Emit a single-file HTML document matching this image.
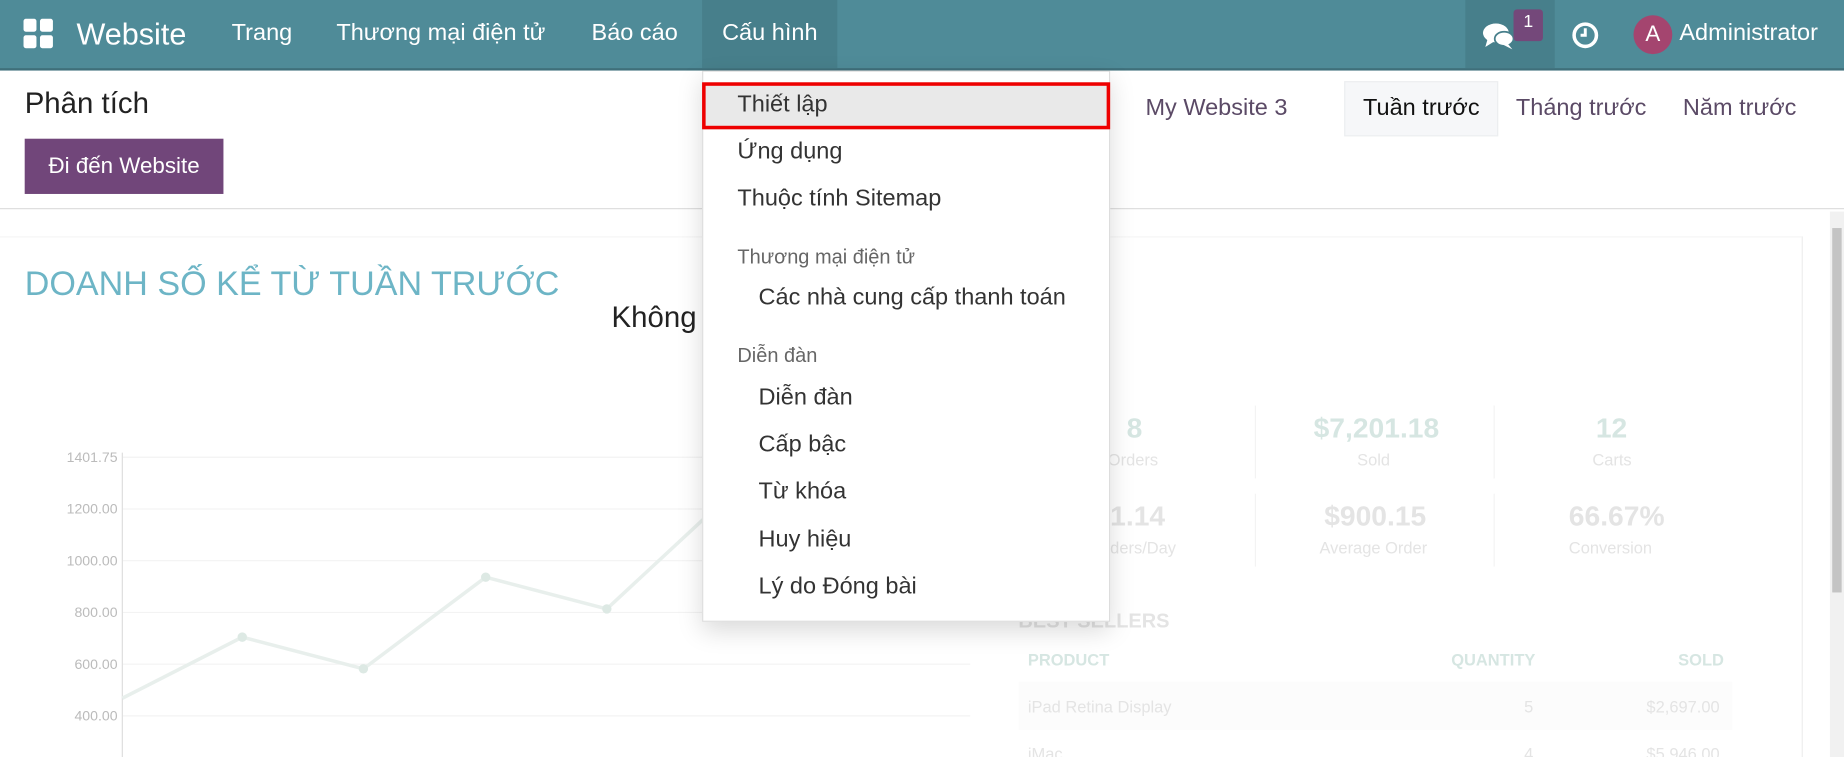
<!DOCTYPE html>
<html><head><meta charset="utf-8"><style>
body{margin:0;width:1844px;height:757px;overflow:hidden;background:#fff;font-family:"Liberation Sans","Noto Sans CJK SC",sans-serif;}
#w{position:absolute;left:0;top:0;width:1568px;height:644px;transform:scale(1.17602,1.1755);transform-origin:0 0;overflow:hidden;}
.a{position:absolute;white-space:nowrap;}
.nav{position:absolute;left:0;top:0;width:1568px;height:58px;background:#4f8b98;border-bottom:2px solid #3f6f7a;}
.nav .a{color:#fff;font-size:20px;top:17px;}
.dd .a{font-size:20px;color:#333;}
.dd .h{font-size:17px;color:#666;}
.f{color:#d6e6e2;}
.g{color:#e4e4e4;}
</style></head><body><div id="w">
<div class="nav">
 <div class="a" style="left:20px;top:16px;width:26px;height:26px;">
  <div style="position:absolute;left:0;top:0;width:11px;height:11px;background:#fff;border-radius:2px"></div>
  <div style="position:absolute;left:14px;top:0;width:11px;height:11px;background:#fff;border-radius:2px"></div>
  <div style="position:absolute;left:0;top:14px;width:11px;height:11px;background:#fff;border-radius:2px"></div>
  <div style="position:absolute;left:14px;top:14px;width:11px;height:11px;background:#fff;border-radius:2px"></div>
 </div>
 <div class="a" style="left:65px;top:14px;font-size:26px">Website</div>
 <div class="a" style="left:197px">Trang</div>
 <div class="a" style="left:286px">Thương mại điện tử</div>
 <div class="a" style="left:503px">Báo cáo</div>
 <div class="a" style="left:597px;top:0;width:115px;height:58px;background:#477f8b"></div>
 <div class="a" style="left:614px">Cấu hình</div>
 <div class="a" style="left:1246px;top:0;width:76px;height:58px;background:#477f8b"></div>
 <svg class="a" style="left:1260px;top:17px" width="30" height="28" viewBox="0 0 30 28"><ellipse cx="12" cy="11" rx="11" ry="8" fill="#fff"/><path d="M5 16 L3 23 L11 18Z" fill="#fff"/><ellipse cx="19" cy="16" rx="8" ry="6" fill="#fff" stroke="#477f8b" stroke-width="1.5"/><path d="M22 20 L26 25 L18 21Z" fill="#fff"/></svg>
 <div class="a" style="left:1287px;top:8px;width:25px;height:27px;background:#74487a;border-radius:3px;font-size:15px;text-align:center;line-height:22px">1</div>
 <svg class="a" style="left:1336px;top:18px" width="24" height="24" viewBox="0 0 24 24"><circle cx="12" cy="12" r="9.5" fill="none" stroke="#fff" stroke-width="3"/><path d="M12 6 V12 H8" fill="none" stroke="#fff" stroke-width="2.5"/></svg>
 <div class="a" style="left:1389px;top:13px;width:33px;height:33px;border-radius:50%;background:#a4456f;text-align:center;line-height:33px;font-size:19px;color:#fff">A</div>
 <div class="a" style="left:1428px">Administrator</div>
</div>
<div class="a" style="left:21px;top:74px;font-size:25px;color:#222">Phân tích</div>
<div class="a" style="left:21px;top:118px;width:169px;height:47px;background:#71467a;color:#fff;font-size:19px;text-align:center;line-height:47px">Đi đến Website</div>
<div class="a" style="left:974px;top:81px;font-size:20px;color:#5b4a66">My Website 3</div>
<div class="a" style="left:1143px;top:69px;width:131px;height:47px;background:#f6f7f9;border:1px solid #eceef0;box-sizing:border-box"></div>
<div class="a" style="left:1159px;top:81px;font-size:20px;color:#111">Tuần trước</div>
<div class="a" style="left:1289px;top:81px;font-size:20px;color:#5b4a66">Tháng trước</div>
<div class="a" style="left:1431px;top:81px;font-size:20px;color:#5b4a66">Năm trước</div>
<div class="a" style="left:0;top:177px;width:1568px;height:1px;background:#ddd"></div>
<div class="a" style="left:0;top:201px;width:1532px;height:443px;background:#fff;border-right:1px solid #eee;border-top:1px solid #f6f6f6"></div>
<div class="a" style="left:1556px;top:180px;width:12px;height:464px;background:#f1f1f1"></div>
<div class="a" style="left:1558px;top:194px;width:8px;height:310px;background:#c4c4c4"></div>
<div class="a" style="left:21px;top:226px;font-size:29px;color:#6db5c6">DOANH SỐ KỂ TỪ TUẦN TRƯỚC</div>
<div class="a" style="left:520px;top:256px;font-size:25px;color:#222">Không có dữ liệu bán hàng gần đây.</div>
<svg class="a" style="left:0;top:370px" width="830" height="274">
 <g stroke="#f3f3f3" stroke-width="1"><line x1="104" y1="19" x2="825" y2="19"/><line x1="104" y1="63" x2="825" y2="63"/><line x1="104" y1="107" x2="825" y2="107"/><line x1="104" y1="151" x2="825" y2="151"/><line x1="104" y1="195" x2="825" y2="195"/><line x1="104" y1="239" x2="825" y2="239"/></g>
 <line x1="104" y1="15" x2="104" y2="274" stroke="#ddd"/>
 <g font-size="12" fill="#bbb" text-anchor="end" font-family="Liberation Sans"><text x="100" y="23">1401.75</text><text x="100" y="67">1200.00</text><text x="100" y="111">1000.00</text><text x="100" y="155">800.00</text><text x="100" y="199">600.00</text><text x="100" y="243">400.00</text></g>
 <polyline points="104,224 206,172 309,199 413,121 516,148 600,70" fill="none" stroke="#e8efec" stroke-width="3"/>
 <g fill="#dde9e4"><circle cx="206" cy="172" r="4"/><circle cx="309" cy="199" r="4"/><circle cx="413" cy="121" r="4"/><circle cx="516" cy="148" r="4"/></g>
</svg>
<div class="a" style="left:1067px;top:345px;width:1px;height:62px;background:#f3f3f3"></div>
<div class="a" style="left:1270px;top:345px;width:1px;height:62px;background:#f3f3f3"></div>
<div class="a" style="left:1067px;top:420px;width:1px;height:62px;background:#f3f3f3"></div>
<div class="a" style="left:1270px;top:420px;width:1px;height:62px;background:#f3f3f3"></div>
<div class="a f" style="left:958px;top:351px;font-size:24px;font-weight:bold">8</div>
<div class="a f" style="left:1117px;top:351px;font-size:24px;font-weight:bold">$7,201.18</div>
<div class="a f" style="left:1357px;top:351px;font-size:24px;font-weight:bold">12</div>
<div class="a g" style="left:942px;top:383px;font-size:14px">Orders</div>
<div class="a g" style="left:1154px;top:383px;font-size:14px">Sold</div>
<div class="a g" style="left:1354px;top:383px;font-size:14px">Carts</div>
<div class="a g" style="left:944px;top:426px;font-size:24px;font-weight:bold">1.14</div>
<div class="a g" style="left:1126px;top:426px;font-size:24px;font-weight:bold">$900.15</div>
<div class="a g" style="left:1334px;top:426px;font-size:24px;font-weight:bold">66.67%</div>
<div class="a g" style="left:944px;top:458px;font-size:14px">ders/Day</div>
<div class="a g" style="left:1122px;top:458px;font-size:14px">Average Order</div>
<div class="a g" style="left:1334px;top:458px;font-size:14px">Conversion</div>
<div class="a g" style="left:866px;top:519px;font-size:17px;font-weight:bold">BEST SELLERS</div>
<div class="a f" style="left:874px;top:553px;font-size:14px;font-weight:bold">PRODUCT</div>
<div class="a f" style="left:1234px;top:553px;font-size:14px;font-weight:bold">QUANTITY</div>
<div class="a f" style="left:1427px;top:553px;font-size:14px;font-weight:bold">SOLD</div>
<div class="a" style="left:866px;top:580px;width:607px;height:41px;background:#fcfcfc"></div>
<div class="a g" style="left:874px;top:593px;font-size:14px">iPad Retina Display</div>
<div class="a g" style="left:1296px;top:593px;font-size:14px">5</div>
<div class="a g" style="left:1400px;top:593px;font-size:14px">$2,697.00</div>
<div class="a g" style="left:874px;top:633px;font-size:14px">iMac</div>
<div class="a g" style="left:1296px;top:633px;font-size:14px">4</div>
<div class="a g" style="left:1400px;top:633px;font-size:14px">$5,946.00</div>
<div class="dd a" style="left:597px;top:60px;width:347px;height:469px;background:#fff;border:1px solid #ddd;box-sizing:border-box;box-shadow:0 8px 20px rgba(0,0,0,.15)">
 <div class="a" style="left:-1px;top:9px;width:347px;height:40px;background:#e9e9e9;border:3px solid #e00;box-sizing:border-box"></div>
 <div class="a" style="left:29px;top:17px">Thiết lập</div>
 <div class="a" style="left:29px;top:57px">Ứng dụng</div>
 <div class="a" style="left:29px;top:97px">Thuộc tính Sitemap</div>
 <div class="a h" style="left:29px;top:148px">Thương mại điện tử</div>
 <div class="a" style="left:47px;top:181px">Các nhà cung cấp thanh toán</div>
 <div class="a h" style="left:29px;top:232px">Diễn đàn</div>
 <div class="a" style="left:47px;top:266px">Diễn đàn</div>
 <div class="a" style="left:47px;top:306px">Cấp bậc</div>
 <div class="a" style="left:47px;top:346px">Từ khóa</div>
 <div class="a" style="left:47px;top:387px">Huy hiệu</div>
 <div class="a" style="left:47px;top:427px">Lý do Đóng bài</div>
</div>
</div></body></html>
